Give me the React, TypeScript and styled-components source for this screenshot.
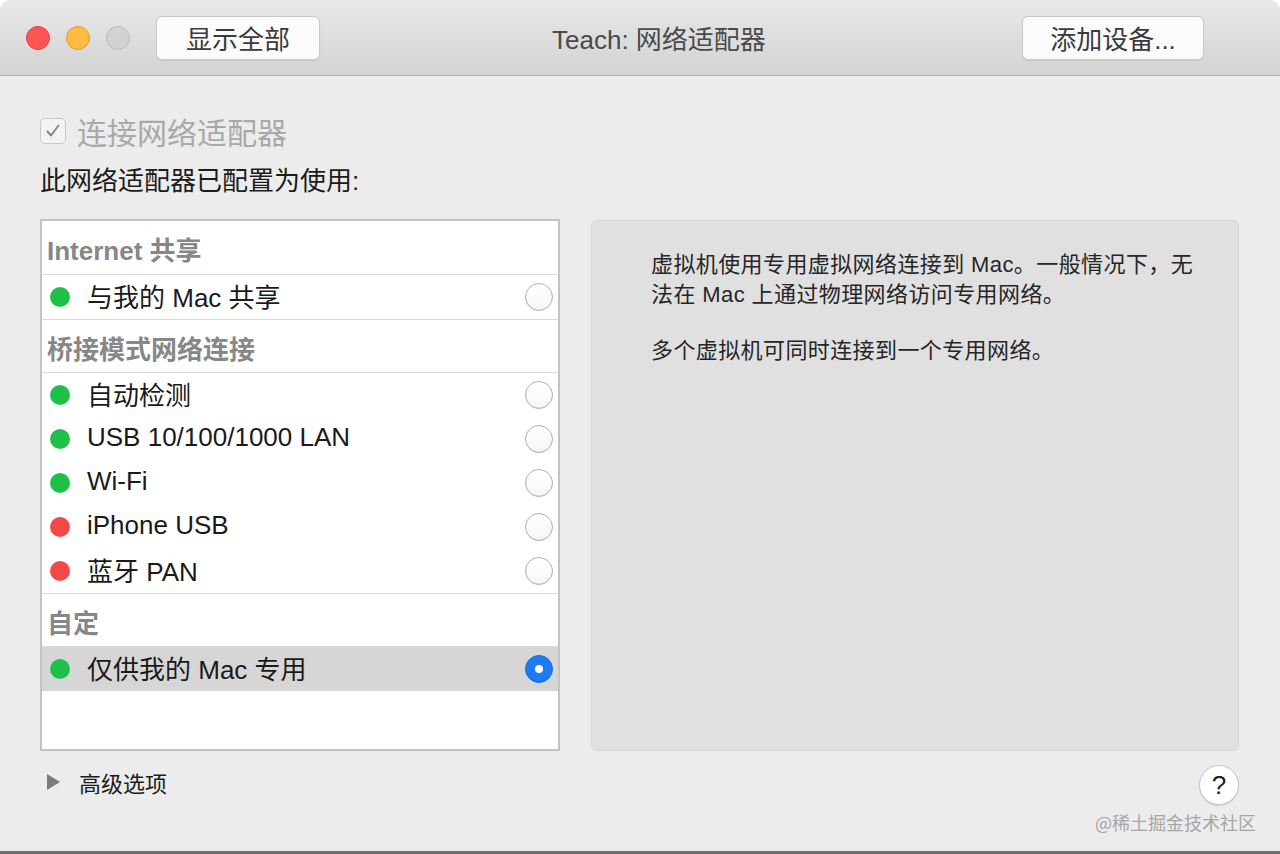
import styled, { createGlobalStyle } from "styled-components";

const GlobalStyle = createGlobalStyle`
    html, body {
        margin: 0;
        padding: 0;
        background: #ffffff;
    }
    body {
        font-family: "Liberation Sans", "Noto Sans CJK SC", sans-serif;
    }
`;

const Window = styled.div`
    position: relative;
    width: 1280px;
    height: 851px;
    background: #ececec;
    border-bottom: 3px solid #6f6f6f;
    border-radius: 10px 10px 0 0;
    overflow: hidden;
    display: flex;
    flex-direction: column;
`;

const TitleBar = styled.header`
    height: 75px;
    flex: none;
    display: flex;
    align-items: center;
    padding: 0 76px 0 26px;
    background: linear-gradient(#e8e8e8, #d3d3d3);
    border-bottom: 1px solid #b1b1b1;
`;

const Lights = styled.div`
    display: flex;
    gap: 16px;
    margin-right: 26px;
`;

const Light = styled.span<{ $fill: string; $edge: string }>`
    width: 24px;
    height: 24px;
    border-radius: 50%;
    box-sizing: border-box;
    background: ${({ $fill }) => $fill};
    border: 1px solid ${({ $edge }) => $edge};
`;

const ToolButton = styled.button<{ $width: number }>`
    width: ${({ $width }) => $width}px;
    height: 44px;
    box-sizing: border-box;
    background: #fbfbfb;
    border: 1px solid #c9c9c9;
    border-radius: 6px;
    box-shadow: 0 1px 1px rgba(0, 0, 0, 0.08);
    font-family: inherit;
    font-size: 26px;
    color: #3a3a3a;
    padding: 0;
`;

const Title = styled.h1`
    margin: 0 0 0 232px;
    font-size: 26px;
    font-weight: 400;
    color: #4a4a4a;
`;

const Spacer = styled.div`
    flex: 1;
`;

const Content = styled.main`
    flex: 1;
    display: flex;
    flex-direction: column;
    padding: 37px 41px 0 40px;
`;

const CheckRow = styled.label`
    display: flex;
    align-items: center;
    height: 36px;
    gap: 11px;
    font-size: 30px;
    color: #a9a9a9;
`;

const CheckBox = styled.span`
    width: 26px;
    height: 26px;
    box-sizing: border-box;
    border: 1px solid #c9c9c9;
    border-radius: 5px;
    background: #f3f3f3;
    display: flex;
    align-items: center;
    justify-content: center;
`;

const Subtitle = styled.p`
    margin: 17px 0 0;
    font-size: 26px;
    line-height: 30px;
    color: #1c1c1c;
`;

const Panels = styled.div`
    margin-top: 23px;
    display: grid;
    grid-template-columns: 520px 1fr;
    gap: 31px;
    height: 532px;
`;

const List = styled.div`
    box-sizing: border-box;
    background: #ffffff;
    border: 2px solid #c3c3c3;
    display: flex;
    flex-direction: column;
`;

const GroupHeader = styled.div<{ $first?: boolean }>`
    height: ${({ $first }) => ($first ? 54 : 53)}px;
    flex: none;
    display: flex;
    align-items: center;
    padding: 2px 0 0 5px;
    box-sizing: border-box;
    font-size: 26px;
    font-weight: 700;
    color: #878787;
    border-bottom: 1px solid #dadada;
`;

const Row = styled.div<{ $selected?: boolean; $last?: boolean }>`
    height: ${({ $last }) => ($last ? 45 : 44)}px;
    flex: none;
    display: flex;
    align-items: center;
    box-sizing: border-box;
    padding: 0 5px 0 8px;
    font-size: 26px;
    color: #1a1a1a;
    background: ${({ $selected }) => ($selected ? "#d6d6d6" : "transparent")};
    border-bottom: ${({ $last }) => ($last ? "1px solid #dadada" : "none")};
`;

const Dot = styled.span<{ $on: boolean }>`
    width: 20px;
    height: 20px;
    border-radius: 50%;
    flex: none;
    background: ${({ $on }) => ($on ? "#1ec048" : "#f24848")};
    margin-right: 17px;
`;

const RowLabel = styled.span`
    flex: 1;
    white-space: nowrap;
    margin-top: -3px;
`;

const Radio = styled.span<{ $checked?: boolean }>`
    width: 28px;
    height: 28px;
    box-sizing: border-box;
    border-radius: 50%;
    flex: none;
    display: flex;
    align-items: center;
    justify-content: center;
    background: ${({ $checked }) => ($checked ? "#1e7cf2" : "linear-gradient(#ffffff, #f6f6f6)")};
    border: 1px solid ${({ $checked }) => ($checked ? "#1a6fdc" : "#b0b0b0")};
    box-shadow: inset 0 -1px 1px rgba(0, 0, 0, 0.06);

    &::after {
        content: "";
        display: ${({ $checked }) => ($checked ? "block" : "none")};
        width: 8px;
        height: 8px;
        border-radius: 50%;
        background: #ffffff;
    }
`;

const InfoPanel = styled.section`
    box-sizing: border-box;
    background: #e0e0e0;
    border: 1px solid #d6d6d6;
    border-radius: 6px;
    margin-top: 1px;
    padding: 29px 40px 0 59px;
    font-size: 22px;
    line-height: 30px;
    letter-spacing: 0.4px;
    color: #262626;

    p {
        margin: 0 0 26px;
        white-space: nowrap;
    }
`;

const BottomRow = styled.div`
    height: 68px;
    display: flex;
    align-items: center;
    padding-left: 7px;
    gap: 19px;
`;

const Disclosure = styled.span`
    width: 0;
    height: 0;
    border-top: 8px solid transparent;
    border-bottom: 8px solid transparent;
    border-left: 13px solid #7b7b7b;
    margin-top: -6px;
`;

const AdvancedLabel = styled.span`
    font-size: 22px;
    color: #1c1c1c;
    margin-top: -6px;
`;

const HelpButton = styled.button`
    margin-left: auto;
    width: 40px;
    height: 40px;
    border-radius: 50%;
    box-sizing: border-box;
    background: #ffffff;
    border: 1px solid #c6c6c6;
    box-shadow: 0 1px 1px rgba(0, 0, 0, 0.12);
    font-family: inherit;
    font-size: 26px;
    color: #1c1c1c;
    padding: 0;
    line-height: 1;
`;

const Watermark = styled.span`
    position: absolute;
    right: 24px;
    bottom: 16px;
    font-size: 18px;
    color: #a6a6a6;
    font-family: "Noto Sans CJK SC", sans-serif;
`;

type Item = { label: string; on: boolean; selected?: boolean };

const groups: { title: string; items: Item[] }[] = [
    { title: "Internet 共享", items: [{ label: "与我的 Mac 共享", on: true }] },
    {
        title: "桥接模式网络连接",
        items: [
            { label: "自动检测", on: true },
            { label: "USB 10/100/1000 LAN", on: true },
            { label: "Wi-Fi", on: true },
            { label: "iPhone USB", on: false },
            { label: "蓝牙 PAN", on: false },
        ],
    },
    { title: "自定", items: [{ label: "仅供我的 Mac 专用", on: true, selected: true }] },
];

export default function App() {
    return (
        <>
            <GlobalStyle />
            <Window>
                <TitleBar>
                    <Lights>
                        <Light $fill="#fc5652" $edge="#e0443e" />
                        <Light $fill="#fdbb3f" $edge="#de9e2f" />
                        <Light $fill="#d2d2d2" $edge="#bcbcbc" />
                    </Lights>
                    <ToolButton $width={164}>显示全部</ToolButton>
                    <Title>Teach: 网络适配器</Title>
                    <Spacer />
                    <ToolButton $width={182}>添加设备...</ToolButton>
                </TitleBar>
                <Content>
                    <CheckRow>
                        <CheckBox>
                            <svg width="16" height="16" viewBox="0 0 16 16">
                                <path d="M2.5 8.5 L6 12.5 L13.5 2.5" fill="none" stroke="#8a8a8a" strokeWidth="2" strokeLinecap="round" strokeLinejoin="round" />
                            </svg>
                        </CheckBox>
                        连接网络适配器
                    </CheckRow>
                    <Subtitle>此网络适配器已配置为使用:</Subtitle>
                    <Panels>
                        <List>
                            {groups.map((g, gi) => (
                                <div key={g.title}>
                                    <GroupHeader $first={gi === 0}>{g.title}</GroupHeader>
                                    {g.items.map((it, ii) => (
                                        <Row key={it.label} $selected={it.selected} $last={ii === g.items.length - 1 && gi < groups.length - 1}>
                                            <Dot $on={it.on} />
                                            <RowLabel>{it.label}</RowLabel>
                                            <Radio $checked={it.selected} />
                                        </Row>
                                    ))}
                                </div>
                            ))}
                        </List>
                        <InfoPanel>
                            <p>
                                虚拟机使用专用虚拟网络连接到 Mac。一般情况下，无
                                <br />
                                法在 Mac 上通过物理网络访问专用网络。
                            </p>
                            <p>多个虚拟机可同时连接到一个专用网络。</p>
                        </InfoPanel>
                    </Panels>
                    <BottomRow>
                        <Disclosure />
                        <AdvancedLabel>高级选项</AdvancedLabel>
                        <HelpButton>?</HelpButton>
                    </BottomRow>
                </Content>
                <Watermark>@稀土掘金技术社区</Watermark>
            </Window>
        </>
    );
}
